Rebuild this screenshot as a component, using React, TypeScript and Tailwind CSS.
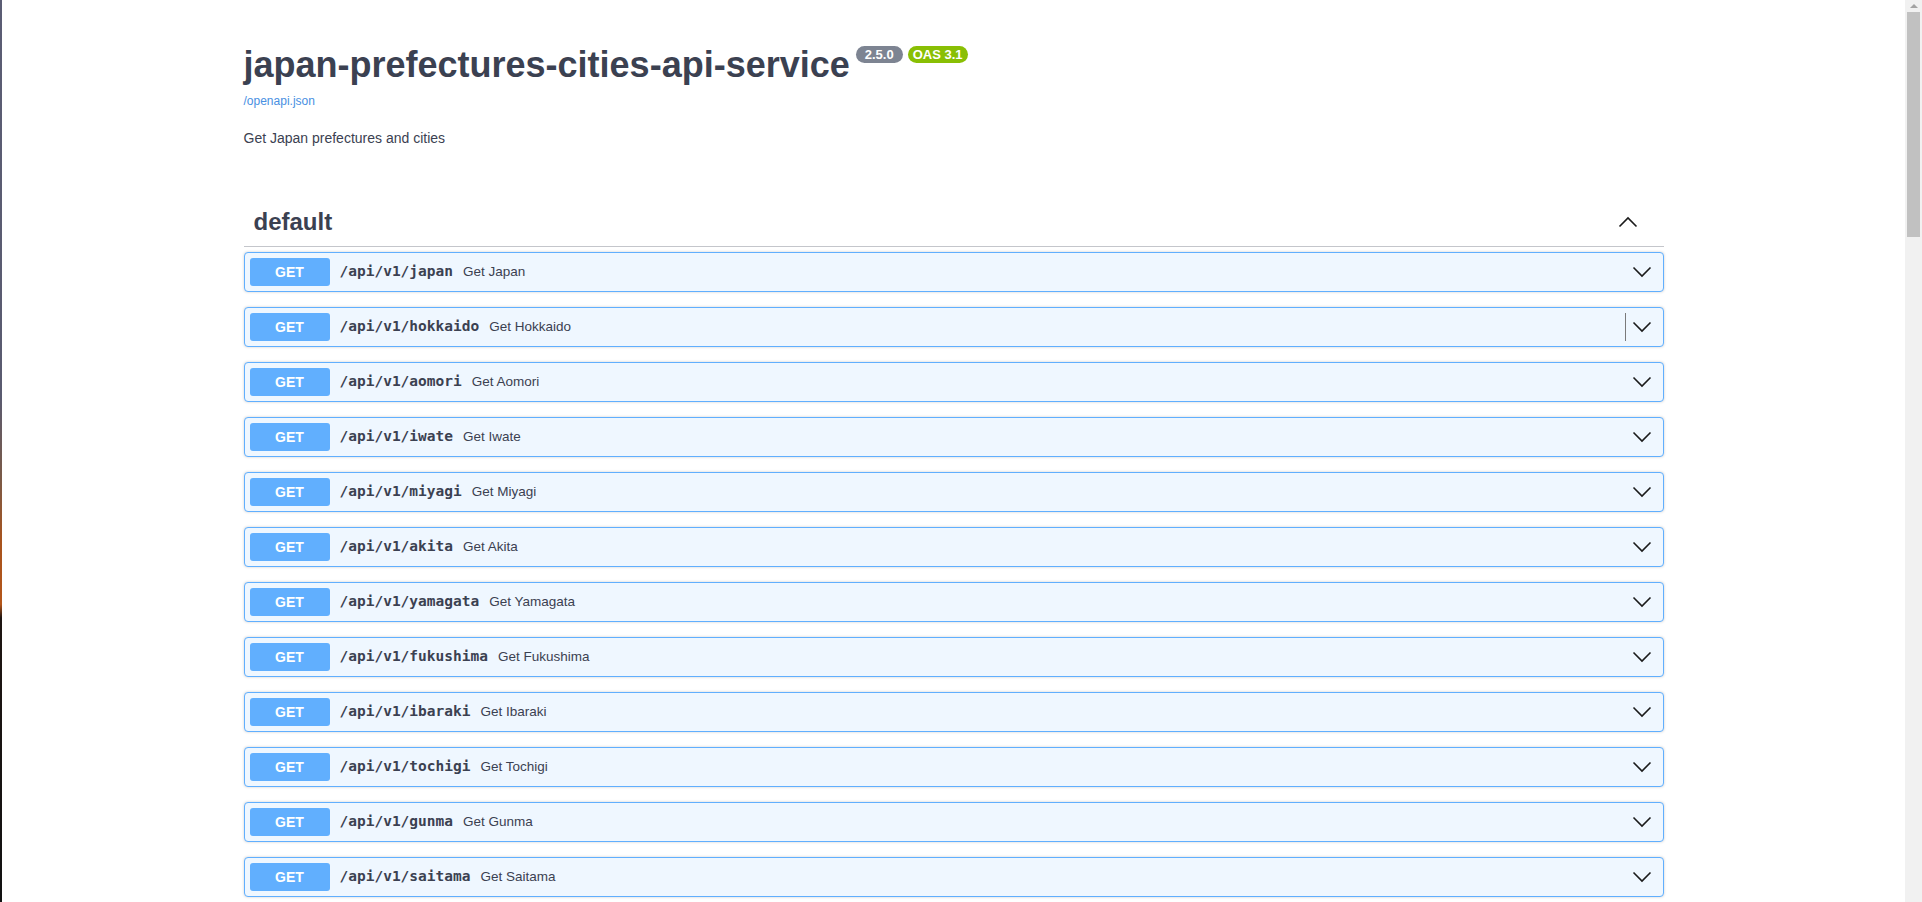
import React from "react";

const rows = [
  ["japan", "Get Japan"],
  ["hokkaido", "Get Hokkaido"],
  ["aomori", "Get Aomori"],
  ["iwate", "Get Iwate"],
  ["miyagi", "Get Miyagi"],
  ["akita", "Get Akita"],
  ["yamagata", "Get Yamagata"],
  ["fukushima", "Get Fukushima"],
  ["ibaraki", "Get Ibaraki"],
  ["tochigi", "Get Tochigi"],
  ["gunma", "Get Gunma"],
  ["saitama", "Get Saitama"],
];

function ChevronDown() {
  return (
    <svg width="20" height="12" viewBox="0 0 20 12" className="block">
      <polyline points="1.5,1.5 10,10 18.5,1.5" fill="none" stroke="#1b1b1b" strokeWidth="1.6" />
    </svg>
  );
}

function ChevronUp() {
  return (
    <svg width="20" height="12" viewBox="0 0 20 12" className="block">
      <polyline points="1.5,10.5 10,2 18.5,10.5" fill="none" stroke="#1b1b1b" strokeWidth="1.6" />
    </svg>
  );
}

export default function App() {
  const sans = { fontFamily: '"Liberation Sans", Arial, sans-serif' };
  return (
    <div className="flex h-[902px] w-[1922px] overflow-hidden bg-white" style={sans}>
      <div className="w-[2px] shrink-0 bg-[linear-gradient(to_bottom,#5b5d74_0%,#5a5b70_44%,#7a5a48_53%,#a8541e_60%,#b4561a_67%,#1e1512_68.5%,#121212_100%)]" />
      <main className="flex-1 min-w-0">
        <div className="mx-auto max-w-[1460px] px-5">
          <div className="pt-[44px]">
            <div className="flex items-start">
              <h2 className="text-[36px] leading-[41px] font-bold text-[#3b4151]">
                japan-prefectures-cities-api-service
              </h2>
              <span className="ml-[6px] mt-[2px] inline-block rounded-full bg-[#7d8492] px-[9px] text-[13px] leading-[17px] font-bold text-white">
                2.5.0
              </span>
              <span className="ml-[5px] mt-[2px] inline-block rounded-full bg-[#89bf04] px-[5px] text-[13px] leading-[17px] font-bold text-white">
                OAS 3.1
              </span>
            </div>
            <div className="mt-[9px] text-[12px] leading-[14px] text-[#4990e2]">/openapi.json</div>
            <p className="mt-[22px] text-[14px] leading-[16px] text-[#3b4151]">Get Japan prefectures and cities</p>
          </div>

          <div className="mt-[52px]">
            <div className="flex items-center justify-between border-b border-[#c4c6cb] pl-[10px] pr-[26px] pt-[10px] pb-[10px]">
              <h3 className="text-[24px] leading-[28px] font-bold text-[#3b4151]">default</h3>
              <ChevronUp />
            </div>
            <div className="mt-[5px] flex flex-col gap-[15px]">
              {rows.map(([p, d], i) => (
                <div
                  key={p}
                  className="flex items-center rounded-[4px] border border-[#61affe] bg-[#eff7ff] p-[5px] shadow-[0_0_3px_rgba(0,0,0,0.19)]"
                >
                  <div className="w-[80px] rounded-[3px] bg-[#61affe] py-[6px] text-center text-[14px] leading-[16px] font-bold text-white">
                    GET
                  </div>
                  <span
                    className="px-[10px] text-[14.5px] font-bold text-[#3b4151]"
                    style={{ fontFamily: '"DejaVu Sans Mono", "Liberation Mono", monospace' }}
                  >
                    /api/v1/{p}
                  </span>
                  <span className="text-[13.5px] text-[#3b4151]">{d}</span>
                  <div className="flex-1" />
                  {i === 1 ? (
                    <div className="mr-[6px] flex h-[28px] items-center border-l border-[#7a7a7a] pl-[6px]">
                      <ChevronDown />
                    </div>
                  ) : (
                    <div className="mr-[6px]">
                      <ChevronDown />
                    </div>
                  )}
                </div>
              ))}
            </div>
          </div>
        </div>
      </main>
      <div className="flex w-[17px] shrink-0 flex-col items-center bg-[#f1f1f1]">
        <div className="flex h-[12px] items-center justify-center">
          <div className="h-0 w-0 border-x-[4px] border-b-[4px] border-x-transparent border-b-[#a3a3a3]" />
        </div>
        <div className="h-[225px] w-[13px] bg-[#c1c1c1]" />
      </div>
    </div>
  );
}
